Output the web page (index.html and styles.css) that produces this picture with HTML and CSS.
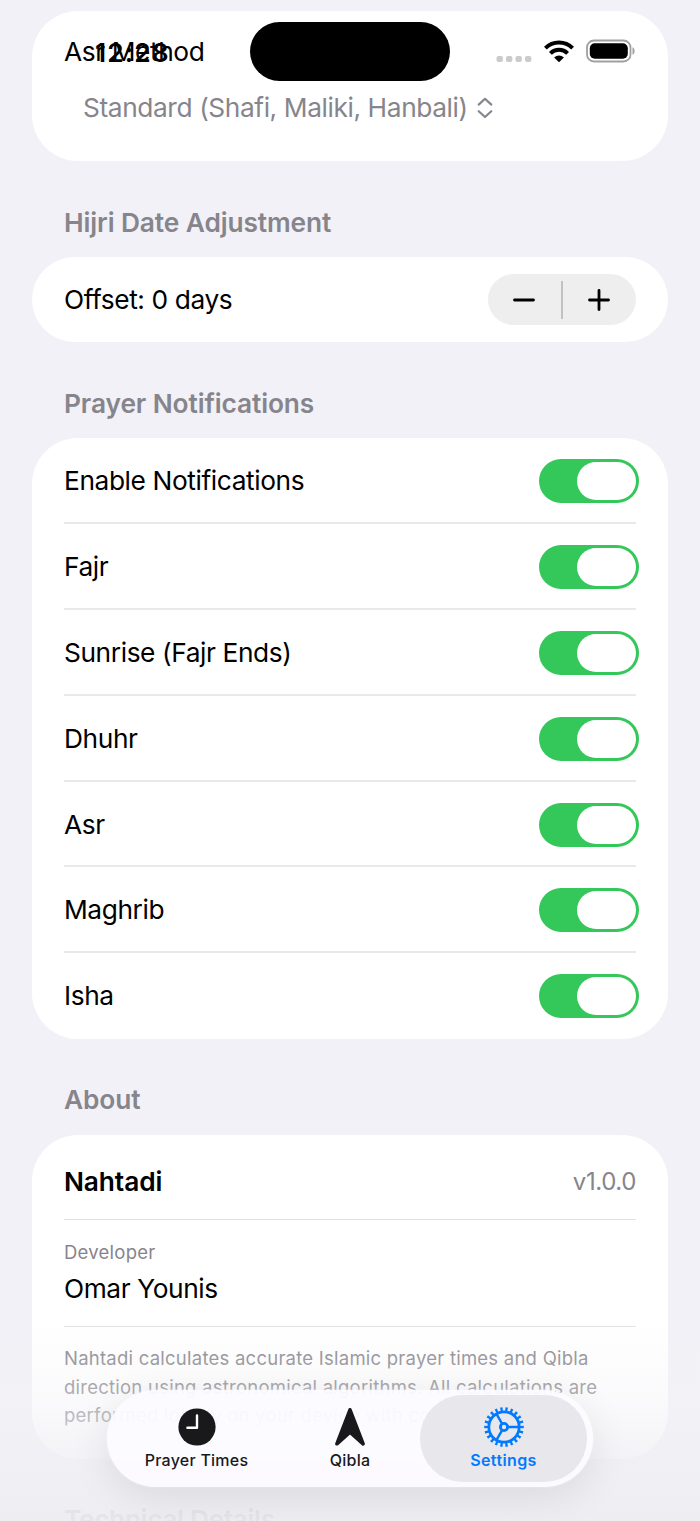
FILE: index.html
```html
<!DOCTYPE html>
<html lang="en">
<head>
<meta charset="utf-8">
<title>Settings</title>
<link rel="stylesheet" href="styles.css">
</head>
<body>
<div class="screen">
  <main class="content">
    <section class="card method">
      <div class="method-label">Asr Method</div>
      <div class="method-value">
        <span>Standard (Shafi, Maliki, Hanbali)</span>
        <svg class="updown" viewBox="0 0 16 22" width="16" height="22"><path d="M1.700 7.600 8 1.800l6.300 5.800M1.700 14.200 8 20l6.300-5.800"/></svg>
      </div>
    </section>

    <h2 class="heading">Hijri Date Adjustment</h2>
    <section class="card offset">
      <span>Offset: 0 days</span>
      <div class="stepper">
        <svg viewBox="0 0 22 22" width="22" height="22"><path d="M1.500 11h19"/></svg>
        <i class="stepper-line"></i>
        <svg viewBox="0 0 22 22" width="22" height="22"><path d="M1.500 11h19M11 1.500v19"/></svg>
      </div>
    </section>

    <h2 class="heading">Prayer Notifications</h2>
    <section class="card toggles">
      <div class="row"><span>Enable Notifications</span><i class="switch"></i></div>
      <div class="row"><span>Fajr</span><i class="switch"></i></div>
      <div class="row"><span>Sunrise (Fajr Ends)</span><i class="switch"></i></div>
      <div class="row"><span>Dhuhr</span><i class="switch"></i></div>
      <div class="row"><span>Asr</span><i class="switch"></i></div>
      <div class="row"><span>Maghrib</span><i class="switch"></i></div>
      <div class="row"><span>Isha</span><i class="switch"></i></div>
    </section>

    <h2 class="heading last">About</h2>
    <section class="card about">
      <div class="about-row app"><b>Nahtadi</b><span class="version">v1.0.0</span></div>
      <div class="about-row developer"><small>Developer</small><span>Omar Younis</span></div>
      <p class="note">Nahtadi calculates accurate Islamic prayer times and Qibla<br>direction using astronomical algorithms. All calculations are<br>performed locally on your device with complete privacy.</p>
    </section>

    <h2 class="heading technical">Technical Details</h2>
  </main>

  <div class="fade"></div>

  <header class="status">
    <span class="time">12:28</span>
    <div class="island"></div>
    <div class="indicators">
      <svg class="dots" viewBox="0 0 36 8" width="36" height="8"><rect x="0.500" y="1" width="6.400" height="6" rx="2"/><rect x="10" y="1" width="6.400" height="6" rx="2"/><rect x="19.500" y="1" width="6.400" height="6" rx="2"/><rect x="29" y="1" width="6.400" height="6" rx="2"/></svg>
      <svg class="wifi" viewBox="0 0 30 23" width="30" height="23"><path class="arc" d="M1.400 8.200a19.300 19.300 0 0 1 27.200 0M6.400 13.400a12.200 12.200 0 0 1 17.200 0"/><path d="M15 22.300l-4.900-4.900a7 7 0 0 1 9.800 0z"/></svg>
      <svg class="battery" viewBox="0 0 50 24" width="50" height="24"><rect class="shell" x="1" y="1.500" width="43.500" height="21" rx="7"/><rect x="3.800" y="4.200" width="38" height="15.600" rx="5"/><path class="cap" d="M46.500 8.200c2.800 1 2.800 6.600 0 7.600z"/></svg>
    </div>
  </header>

  <nav class="tabs">
    <div class="tab">
      <svg viewBox="0 0 40 40" width="40" height="40"><circle cx="20" cy="20" r="18.600" fill="#19191b"/><path d="M20 8.500V20.700H10.400" fill="none" stroke="#fff" stroke-width="2.400" stroke-linecap="round" stroke-linejoin="round"/></svg>
      <span>Prayer Times</span>
    </div>
    <div class="tab">
      <svg viewBox="0 0 40 40" width="40" height="40"><path d="M20 2.800 6.900 36.800 20 25.200 33.100 36.800z" fill="#19191b" stroke="#19191b" stroke-width="3.600" stroke-linejoin="round"/></svg>
      <span>Qibla</span>
    </div>
    <div class="tab active">
      <svg class="gear" viewBox="0 0 40 40" width="40" height="40">
        <circle class="teeth" cx="20" cy="20" r="17.700" pathLength="220"/>
        <circle cx="20" cy="20" r="15.200"/>
        <circle cx="20" cy="20" r="3.600"/>
        <path class="spokes" d="M23.700 20H35.400M18.150 16.800 12.300 6.670M18.150 23.200 12.300 33.330"/>
      </svg>
      <span>Settings</span>
    </div>
  </nav>
</div>
</body>
</html>
```
FILE: styles.css
```css
* { box-sizing: border-box; }
body {
  margin: 0;
  background: #f2f1f7;
  color: #000;
  font: 400 26.3px/32px Inter, "Liberation Sans", sans-serif;
  letter-spacing: -0.4px;
}
.screen {
  position: relative;
  width: 700px;
  height: 1521px;
  overflow: hidden;
}
.content { padding: 11px 32px 0; }
.card {
  background: #fff;
  border-radius: 46px;
  padding: 0 32px;
}
.heading {
  margin: 0;
  padding: 46px 32px 18px;
  height: 96px;
  font-size: 26.3px;
  line-height: 32px;
  font-weight: 600;
  letter-spacing: -0.1px;
  color: #86858b;
}
.heading.last { padding-top: 45px; }
.heading.technical { padding-top: 45px; letter-spacing: -0.35px; }
.method { height: 150px; padding-top: 25px; }
.method-value {
  display: flex;
  align-items: center;
  gap: 9px;
  margin: 24px 0 0 19px;
  color: #86858b;
}
.updown { fill: none; stroke: #86858b; stroke-width: 2.2; stroke-linecap: round; stroke-linejoin: round; }

.offset {
  display: flex;
  align-items: center;
  justify-content: space-between;
  height: 85px;
}
.stepper {
  display: grid;
  grid-template-columns: 73px 2px 73px;
  align-items: center;
  justify-items: center;
  width: 148px;
  height: 51px;
  border-radius: 26px;
  background: #eee;
}
.stepper svg { margin-right: 2px; fill: none; stroke: #000; stroke-width: 2.8; stroke-linecap: round; }
.stepper-line { width: 2px; height: 38px; background: #c2c2c2; }

.toggles { height: 601px; }
.row {
  display: flex;
  align-items: center;
  justify-content: space-between;
  height: 85.9px;
  padding-top: 2px;
  border-bottom: 2px solid #e9e9ea;
}
.row:last-child { border-bottom: 0; padding-top: 0; }
.switch {
  display: block;
  width: 100px;
  height: 44px;
  margin-right: -3px;
  padding: 3px;
  border-radius: 22px;
  background: #34c759;
}
.switch::after {
  content: "";
  display: block;
  width: 59px;
  height: 38px;
  margin-left: auto;
  border-radius: 19px;
  background: #fff;
}

.about { height: 324px; }
.about-row { border-bottom: 1.5px solid #e2e2e4; }
.app {
  display: flex;
  align-items: center;
  justify-content: space-between;
  height: 85px;
  padding-top: 9px;
}
.app b { font-weight: 600; letter-spacing: -0.1px; }
.version { color: #86858b; font-size: 24px; letter-spacing: -0.4px; }
.developer { display: flex; flex-direction: column; height: 107px; padding-top: 20px; }
.developer small {
  font-size: 18.5px;
  line-height: 24px;
  letter-spacing: 0.25px;
  color: #86858b;
}
.developer span { margin-top: 9px; }
.note {
  margin: 0;
  padding-top: 17px;
  font-size: 18.5px;
  line-height: 28.6px;
  letter-spacing: 0.24px;
  white-space: nowrap;
  color: #86858b;
}

.fade {
  position: absolute;
  inset: 1320px 0 0;
  background: linear-gradient(rgba(242, 242, 246, 0), rgba(242, 242, 246, 0.42) 42%, rgba(240, 239, 244, 0.82) 72%, rgba(238, 237, 242, 0.92));
}

/* status bar floats over the scrolled list */
.status {
  position: absolute;
  inset: 22px 0 auto;
  display: grid;
  grid-template-columns: 250px 200px 1fr;
  height: 59px;
}
.time {
  padding: 15px 0 0 95px;
  font-weight: 600;
  letter-spacing: 1.1px;
  line-height: 32px;
}
.island { border-radius: 30px; background: #000; }
.indicators {
  display: flex;
  align-items: flex-start;
  padding: 17px 0 0 46px;
}
.dots { fill: #cbcbcb; margin-top: 16px; }
.wifi { margin: 1px 0 0 12px; }
.arc { fill: none; stroke: #000; stroke-width: 4; }
.battery { margin-left: 12px; }
.shell { fill: none; stroke: #a0a0a0; stroke-width: 1.8; }
.cap { fill: #a0a0a0; }

.tabs {
  position: absolute;
  left: 107px;
  top: 1390px;
  display: grid;
  grid-template-columns: 167px 1fr 167px;
  width: 486px;
  height: 97px;
  padding: 5px 6px;
  border-radius: 49px;
  background: rgba(252, 251, 255, 0.94);
  box-shadow: 0 10px 40px rgba(0, 0, 0, 0.09), 0 0 3px rgba(255, 255, 255, 0.8);
}
.tab {
  display: flex;
  flex-direction: column;
  align-items: center;
  padding-top: 12px;
  border-radius: 43px;
  font-size: 16px;
  line-height: 20px;
  font-weight: 550;
  letter-spacing: 0.25px;
  color: #19191b;
}
.tab span { margin-top: 3px; }
.active { background: rgba(230, 229, 234, 0.93); color: #007aff; font-weight: 600; letter-spacing: 0.4px; }
.gear { fill: none; stroke: #007aff; stroke-width: 2.8; }
.gear .spokes { stroke-width: 2.4; }
.gear .teeth { stroke-width: 4.2; stroke-dasharray: 4.6 5.4; stroke-dashoffset: 2.3; }
```
